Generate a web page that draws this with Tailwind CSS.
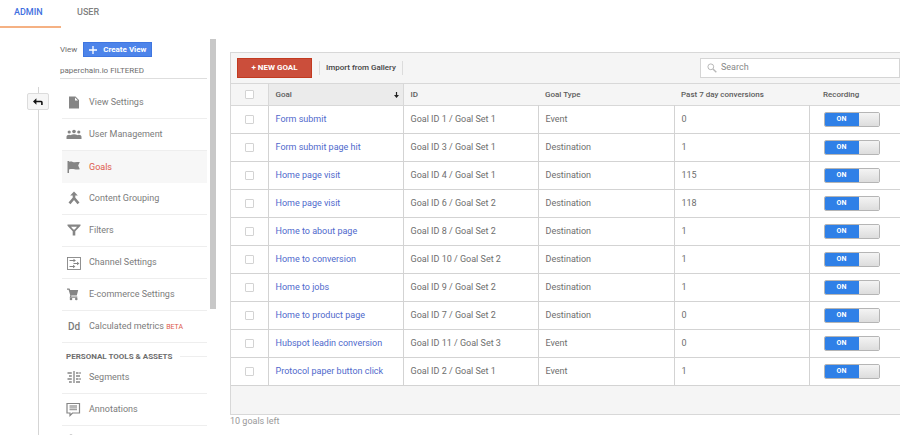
<!DOCTYPE html>
<html lang="en">
<head>
    <meta charset="UTF-8">
    <meta name="viewport" content="width=device-width, initial-scale=1.0">
    <title>Admin - Goals</title>
    <script src="https://cdn.jsdelivr.net/npm/@tailwindcss/browser@4"></script>
</head>
<body class="bg-white h-screen overflow-hidden flex flex-col font-['Roboto',sans-serif] text-[9px] text-[#6e6e6e]">

    <!-- Tabs -->
    <nav class="flex h-7 shrink-0 text-[9px] leading-6 font-medium">
        <a href="#admin" class="w-[61px] pl-3.5 text-[#3f6fe0] border-b-2 border-b-[#f5b183]">ADMIN</a>
        <a href="#user" class="pl-4 text-[#808080]">USER</a>
    </nav>

    <div class="flex flex-1 min-h-0 overflow-hidden">
        <!-- Back button rail -->
        <div class="w-[60px] shrink-0 pl-4 pt-[59px] flex flex-col items-center">
            <span class="h-1.5 w-px shrink-0 bg-[#d5d5d5]"></span>
            <button aria-label="Back" class="w-[22px] h-[17px] shrink-0 flex items-center justify-center bg-[#f6f6f6] border border-[#dcdcdc] rounded-xs">
                <svg class="w-2.5 h-2" viewBox="0 0 10 8"><path d="M0 3.500 3.400.3v2.400H8.200q1.500 0 1.500 1.500V7H8.100V4.300H3.400v2.400z" fill="#111"/></svg>
            </button>
            <span class="w-px flex-1 bg-[#d5d5d5]"></span>
        </div>

        <!-- View column -->
        <aside class="w-[147px] shrink-0 pt-3.5">
            <div class="flex items-center gap-1.5 text-[8px]">
                <span>View</span>
                <button class="h-[15px] w-[69px] flex items-center justify-center gap-1.5 bg-[#4d84ea] border border-[#3f76e0] text-white font-bold text-[8px]">
                    <svg class="w-2 h-2" viewBox="0 0 8 8" stroke="#fff" stroke-width="1.3"><path d="M4 0v8M0 4h8"/></svg>
                    Create View
                </button>
            </div>
            <div class="h-[22px] pt-2 text-[8px] leading-3 border-b border-[#dedede]">paperchain.io FILTERED</div>

            <ul class="pl-0.5 pt-2 text-[9px] text-[#7c7c7c]">
                <li><a href="#" class="h-8 flex items-center gap-[7px] pl-1 pt-px border-b border-[#eeeeee]">
                    <svg class="w-4 h-4" viewBox="0 0 16 16"><path d="M3 1.500h6.500L13 5v8.500H3zM9 2.500v3h3z" fill="#858585" fill-rule="evenodd"/></svg>
                    View Settings</a></li>
                <li><a href="#" class="h-8 flex items-center gap-[7px] pl-1 pt-px border-b border-[#eeeeee]">
                    <svg class="w-4 h-4" viewBox="0 0 16 16" fill="#858585"><circle cx="3.200" cy="5" r="1.600"/><circle cx="8" cy="4.500" r="1.800"/><circle cx="12.800" cy="5" r="1.600"/><path d="M.5 12V9.800c0-1.300 1.200-2 2.600-2 .7 0 1.200.2 1.600.5-.8.6-1.100 1.200-1.100 2V12zM3.500 12v-2c0-1.700 2-2.700 4.500-2.700s4.500 1 4.500 2.700v2zM12.400 12v-1.700c0-.8-.3-1.400-1.100-2 .4-.3 1-.5 1.600-.5 1.400 0 2.600.7 2.600 2V12z"/></svg>
                    User Management</a></li>
                <li><a href="#" class="h-8 flex items-center gap-[7px] pl-1 pt-px bg-[#f7f7f7] text-[#dd5a4b]">
                    <svg class="w-4 h-4" viewBox="0 0 16 16"><path d="M1.500 1H3v.8c2.500-.8 4 .5 5.800.5 1.500 0 3-.2 5-.2l-1.600 3.500 1.600 3.600c-2 .3-3.600.3-5.200 0C6.800 8.800 5 8.700 3 9.400V13H1.500z" fill="#858585"/></svg>
                    Goals</a></li>
                <li><a href="#" class="h-8 flex items-center gap-[7px] pl-1 pt-px border-b border-[#eeeeee]">
                    <svg class="w-4 h-4" viewBox="0 0 16 16"><path d="M8 .5 11.800 4.500H4.200z" fill="#858585"/><path d="M8 4v3L3.500 12.300M8 7l4.500 5.300" fill="none" stroke="#858585" stroke-width="2.600"/></svg>
                    Content Grouping</a></li>
                <li><a href="#" class="h-8 flex items-center gap-[7px] pl-1 pt-px border-b border-[#eeeeee]">
                    <svg class="w-4 h-4" viewBox="0 0 16 16"><path d="M1.500 1.500h13v1.200L9.300 8.200v4.300H6.700V8.200L1.500 2.700zM5 3.800l2.300 2.600h1.400L11 3.800z" fill="#858585" fill-rule="evenodd"/></svg>
                    Filters</a></li>
                <li><a href="#" class="h-8 flex items-center gap-[7px] pl-1 pt-px border-b border-[#eeeeee]">
                    <svg class="w-4 h-4" viewBox="0 0 16 16" fill="none" stroke="#858585"><rect x="1.500" y="2.500" width="13" height="12" stroke-width=".9"/><path d="M3.500 5.500H8M7.500 8.500H12M3.500 11.500H8" stroke-width="1.200"/><path d="M7.500 3.700 9.900 5.500 7.500 7.300zM11 6.700l2.400 1.800-2.400 1.800zM7 9.700l2.400 1.800L7 13.300z" fill="#858585" stroke="none"/></svg>
                    Channel Settings</a></li>
                <li><a href="#" class="h-8 flex items-center gap-[7px] pl-1 pt-px border-b border-[#eeeeee]">
                    <svg class="w-4 h-4" viewBox="0 0 16 16" fill="#858585"><path d="M1 1.500h2.500l.7 1.500H12.200L10.800 8.500H5.400l-.3 1h6.200v1.200H3.600l.7-2.200L2.600 2.700H1z"/><circle cx="5" cy="12" r="1.300"/><circle cx="10.300" cy="12" r="1.300"/></svg>
                    E-commerce Settings</a></li>
                <li><a href="#" class="h-8 flex items-center gap-[7px] pl-1 border-b border-[#eeeeee]">
                    <b class="w-4 text-center text-[10px] leading-4 font-medium">Dd</b>
                    <span>Calculated metrics <span class="text-[7px] text-[#dd5a4b]">BETA</span></span></a></li>
            </ul>

            <h2 class="h-[19px] pl-1.5 pt-2 flex items-center gap-2 font-bold text-[8px] leading-3 text-[#6e6e6e] whitespace-nowrap">
                PERSONAL TOOLS &amp; ASSETS
                <span class="flex-1 h-px bg-[#eeeeee]"></span>
            </h2>

            <ul class="pl-0.5 text-[9px] text-[#7c7c7c]">
                <li><a href="#" class="h-8 flex items-center gap-[7px] pl-1 border-b border-[#eeeeee]">
                    <svg class="w-4 h-4" viewBox="0 0 16 16" fill="none" stroke="#858585" stroke-width="1.300"><path d="M8 1v12M1.500 3h4.300M3 6h2.800M1.500 9h4.300M3 12h2.800M10 3h2.500M13.300 3h1.500M10 6h4M10 9h2.500M13.300 9h1.500M10 12h4"/></svg>
                    Segments</a></li>
                <li><a href="#" class="h-8 flex items-center gap-[7px] pl-1 border-b border-[#eeeeee]">
                    <svg class="w-4 h-4" viewBox="0 0 16 16" fill="none" stroke="#858585"><path d="M1 1.500h12.500v9.500H6.500L4 13.500V11H1z" stroke-width="1.200"/><path d="M3.500 4h7.500M3.500 5.800h7.500M3.500 7.600h7.500" stroke-width="1.300" stroke="#a0a0a0"/></svg>
                    Annotations</a></li>
                <li class="h-8 flex items-center pl-1">
                    <svg class="w-4 h-4" viewBox="0 0 16 16" fill="none" stroke="#858585" stroke-width="1.200"><circle cx="5" cy="3" r="2"/><circle cx="11" cy="10" r="3"/></svg>
                </li>
            </ul>
        </aside>

        <!-- Scrollbar -->
        <div class="w-1.5 h-[270px] ml-[3px] mt-[11px] shrink-0 bg-[#c8c8c8]"></div>

        <!-- Goals panel -->
        <main class="flex-1 min-w-0 ml-3.5 pt-6">
            <section class="bg-[#f5f5f5] border-y border-l border-[#d8d8d8]">
                <div class="h-[30px] flex items-center pl-1.5">
                    <button class="w-[75px] h-5 bg-[#cb4e3b] border border-[#c23a20] text-white font-bold text-[8px]">+ NEW GOAL</button>
                    <button class="ml-[7px] h-3.5 px-1.5 border-x border-[#dcdcdc] font-medium text-[8px] leading-3 text-[#444]">Import from Gallery</button>
                    <label class="ml-auto w-[200px] h-5 flex items-center gap-1 pl-1.5 bg-white border border-[#d5d5d5]">
                        <svg class="w-2.5 h-2.5" viewBox="0 0 10 10" fill="none" stroke="#b8b8b8"><circle cx="3.800" cy="3.800" r="2.900"/><path d="M6 6l3.300 3.300" stroke-width="1.400"/></svg>
                        <input type="search" aria-label="Search" placeholder="Search" class="flex-1 min-w-0 text-[9px] outline-none placeholder:text-[#888]">
                    </label>
                </div>

                <table class="w-full table-fixed border-collapse bg-white text-left">
                    <colgroup>
                        <col class="w-[37px]"><col class="w-[135px]"><col class="w-[135px]"><col class="w-[136px]"><col class="w-[135px]"><col>
                    </colgroup>
                    <thead class="bg-[#f5f5f5] border-y border-[#d8d8d8] text-[8px] text-[#5c5c5c]">
                        <tr class="h-[22px]">
                            <th><input type="checkbox" aria-label="Select all goals" class="block mx-auto appearance-none w-[9px] h-[9px] bg-white border border-[#d3d3d3] rounded-[1px]"></th>
                            <th class="pl-[7px] pr-1 font-medium bg-[#ebebeb] border-x border-[#d8d8d8]">
                                <span class="flex items-center justify-between">Goal
                                    <svg class="w-[5px] h-1.5" viewBox="0 0 5 6"><path d="M1.900 0h1.200v3H5L2.500 6 0 3h1.900z" fill="#222"/></svg>
                                </span>
                            </th>
                            <th class="px-[7px] font-medium">ID</th>
                            <th class="px-[7px] font-medium">Goal Type</th>
                            <th class="px-[7px] font-medium">Past 7 day conversions</th>
                            <th class="pl-3.5 font-medium">Recording</th>
                        </tr>
                    </thead>
                    <tbody id="goals"></tbody>
                </table>
                <div class="h-7"></div>
            </section>
            <p class="text-[9px] leading-3 text-[#999]">10 goals left</p>
        </main>
    </div>

    <script>
        const goals = [
            ['Form submit', 'Goal ID 1 / Goal Set 1', 'Event', 0],
            ['Form submit page hit', 'Goal ID 3 / Goal Set 1', 'Destination', 1],
            ['Home page visit', 'Goal ID 4 / Goal Set 1', 'Destination', 115],
            ['Home page visit', 'Goal ID 6 / Goal Set 2', 'Destination', 118],
            ['Home to about page', 'Goal ID 8 / Goal Set 2', 'Destination', 1],
            ['Home to conversion', 'Goal ID 10 / Goal Set 2', 'Destination', 1],
            ['Home to jobs', 'Goal ID 9 / Goal Set 2', 'Destination', 1],
            ['Home to product page', 'Goal ID 7 / Goal Set 2', 'Destination', 0],
            ['Hubspot leadin conversion', 'Goal ID 11 / Goal Set 3', 'Event', 0],
            ['Protocol paper button click', 'Goal ID 2 / Goal Set 1', 'Event', 1]
        ];

        document.getElementById('goals').innerHTML = goals.map(([name, id, type, count]) => `
            <tr class="h-7 border-b border-[#d3d3d3]">
                <td class="border-r border-[#d3d3d3]"><input type="checkbox" aria-label="Select ${name}" class="block mx-auto appearance-none w-[9px] h-[9px] bg-white border border-[#d3d3d3] rounded-[1px]"></td>
                <td class="px-[7px] border-r border-[#d3d3d3]"><a href="#" class="text-[#4f69cc]">${name}</a></td>
                <td class="px-[7px] border-r border-[#d3d3d3]">${id}</td>
                <td class="px-[7px] border-r border-[#d3d3d3]">${type}</td>
                <td class="px-[7px] border-r border-[#d3d3d3]">${count}</td>
                <td class="pl-3.5">
                    <button role="switch" aria-checked="true" aria-label="Recording ${name}" class="flex w-14 h-[15px] border border-[#b5b5b5] rounded-xs overflow-hidden">
                        <span class="w-[34px] h-full bg-[#2f80e7] text-white font-bold text-[7px] leading-[13px] text-center">ON</span>
                        <span class="flex-1 h-full bg-linear-to-b from-[#f4f4f4] to-[#dddddd]"></span>
                    </button>
                </td>
            </tr>`).join('');
    </script>
</body>
</html>
